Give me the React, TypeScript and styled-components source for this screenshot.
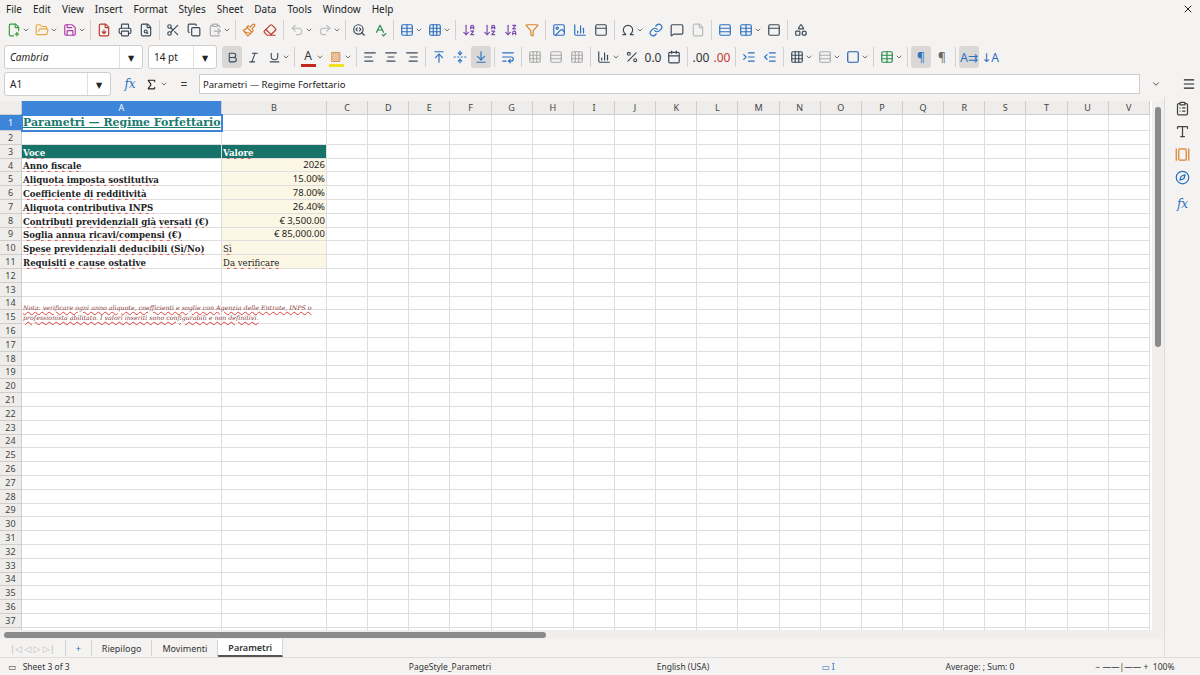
import React from "react";
import styled, { createGlobalStyle } from "styled-components";
import {
  FilePlus2, FolderOpen, Save, FileDown, Printer, FileSearch, Scissors, Copy, ClipboardPaste,
  Paintbrush, Eraser, Undo2, Redo2, SearchCode, SpellCheck, Table, Grid3x3, ArrowDownAZ,
  ArrowDownZA, Filter, Image, BarChart3, Omega, Link, MessageSquare, File, Rows3, PanelTop,
  Shapes, Bold, Italic, Underline, AlignLeft, AlignCenter, AlignRight, ArrowUpToLine,
  FoldVertical, ArrowDownToLine, WrapText, Percent, Calendar, IndentIncrease, IndentDecrease,
  Square, Menu, ClipboardList, Type, GalleryHorizontal, Compass, ChevronDown, X, Sigma,
} from "lucide-react";

const Global = createGlobalStyle`
  html, body { margin: 0; padding: 0; }
  body { width: 1200px; height: 675px; overflow: hidden; background: #f4f3f2;
    font-family: "Noto Sans", "DejaVu Sans", sans-serif; font-size: 11px; color: #222; }
`;

const Shell = styled.div`
  width: 1200px; height: 675px; display: flex; flex-direction: column;
`;
const MenuBar = styled.div`
  height: 17px; display: flex; align-items: center; padding: 0 6px; gap: 11px; font-size: 10px;
`;
const MenuFill = styled.div` flex: 1; `;
const Bar = styled.div<{ $h: number }>`
  height: ${(p) => p.$h}px; display: flex; align-items: center; padding: 0 4px; gap: 1px;
`;
const Btn = styled.div<{ $on?: boolean; $c?: string }>`
  width: 20px; height: 22px; display: flex; align-items: center; justify-content: center;
  border-radius: 3px; color: ${(p) => p.$c || "#3b4a5a"};
  background: ${(p) => (p.$on ? "#d9d8d6" : "transparent")};
`;
const Drop = styled(ChevronDown)` margin-left: -3px; margin-right: 1px; color: #333; `;
const Sep = styled.div` width: 1px; height: 20px; background: #d2d1cf; margin: 0 2px; `;
const Combo = styled.div<{ $w: number; $italic?: boolean }>`
  width: ${(p) => p.$w}px; height: 22px; background: #fff; border: 1px solid #cfcecc;
  border-radius: 3px; display: flex; align-items: center; font-size: 10px;
  font-style: ${(p) => (p.$italic ? "italic" : "normal")}; margin-right: 4px;
  span { flex: 1; padding-left: 5px; }
  b { width: 22px; border-left: 1px solid #e2e1df; height: 100%; display: flex;
    align-items: center; justify-content: center; font-size: 8px; }
`;
const Glyph = styled.div<{ $c?: string; $bar?: string; $on?: boolean }>`
  height: 22px; min-width: 18px; padding: 0 1px; display: flex; flex-direction: column;
  align-items: center; justify-content: center; font-size: 12px; color: ${(p) => p.$c || "#333"};
  border-radius: 3px; background: ${(p) => (p.$on ? "#d9d8d6" : "transparent")};
  &::after { content: ""; display: ${(p) => (p.$bar ? "block" : "none")}; width: 15px; height: 3px;
    background: ${(p) => p.$bar}; }
`;
const FormulaRow = styled.div`
  height: 26px; display: flex; align-items: center; padding: 0 4px; gap: 5px;
`;
const Input = styled.div`
  flex: 1; height: 18px; background: #fff; border: 1px solid #cfcecc; display: flex;
  align-items: center; padding-left: 3px; font-size: 9.5px;
`;
const Main = styled.div` flex: 1; display: flex; min-height: 0; `;
const SheetArea = styled.div` flex: 1; display: flex; flex-direction: column; min-width: 0; `;
const GridWrap = styled.div` flex: 1; display: flex; min-height: 0; padding-top: 4px; `;
const Grid = styled.div`
  flex: 1; display: grid; background: #fff; overflow: hidden; align-content: start;
  grid-template-columns: 22px 200px 105px repeat(20, 41.15px);
  grid-auto-rows: 13.8px; grid-template-rows: 14px 16px;
`;
const Head = styled.div<{ $sel?: boolean }>`
  background: ${(p) => (p.$sel ? "#3c85d9" : "#eeedeb")};
  color: ${(p) => (p.$sel ? "#fff" : "#444")}; font-size: 9px; display: flex;
  align-items: center; justify-content: center; border-right: 1px solid #cfcecc;
  border-bottom: 1px solid #cfcecc; box-sizing: border-box;
`;
const Cell = styled.div<{ $bg?: string; $right?: boolean; $top?: boolean }>`
  box-sizing: border-box; border-right: 1px solid #dedede; border-bottom: 1px solid #dedede;
  background: ${(p) => p.$bg || "#fff"}; display: flex; align-items: flex-end;
  justify-content: ${(p) => (p.$right ? "flex-end" : "flex-start")};
  padding: 0 1px; font-size: 9.5px; white-space: nowrap; overflow: visible; position: relative;
  z-index: ${(p) => (p.$top ? 3 : "auto")};
`;
const Label = styled.span<{ $c?: string }>`
  font-family: "DejaVu Serif", serif; font-weight: bold; font-size: 8.6px; color: ${(p) => p.$c || "#222"};
  text-decoration: underline wavy #e0403a; text-decoration-thickness: 1px;
`;
const Title = styled.span`
  font-family: "DejaVu Serif", serif; font-weight: bold; font-size: 11px; color: #1b7a6d;
  text-decoration: underline; padding-bottom: 1px;
`;
const Note = styled.span`
  position: absolute; left: 1px; top: 6px; width: 300px; white-space: normal; line-height: 10px;
  font-family: "DejaVu Serif", serif; font-style: italic; font-size: 6.3px; color: #8a3a3a;
  text-decoration: underline wavy #e0403a; z-index: 2;
`;
const VScroll = styled.div`
  width: 12px; background: #f0efee; display: flex; justify-content: center; padding-top: 4px;
  div { width: 6px; height: 240px; margin-top: 2px; background: #8a8a8a; border-radius: 3px; }
`;
const HScroll = styled.div`
  height: 9px; display: flex; align-items: center; padding-left: 4px; background: #f0efee;
  div { width: 542px; height: 6px; background: #8a8a8a; border-radius: 3px; }
`;
const Tabs = styled.div`
  height: 18px; display: flex; align-items: center; font-size: 9px; color: #333;
`;
const Tab = styled.div<{ $on?: boolean }>`
  padding: 0 10px; height: 16px; display: flex; align-items: center; border-right: 1px solid #d5d4d2;
  font-weight: ${(p) => (p.$on ? 600 : 400)}; background: ${(p) => (p.$on ? "#fff" : "transparent")};
  border-bottom: ${(p) => (p.$on ? "2px solid #555" : "none")};
`;
const Status = styled.div`
  height: 17px; display: grid; align-items: center; font-size: 8.5px; color: #333;
  grid-template-columns: 300px 300px 166px 124px 180px 130px;
  border-top: 1px solid #dedddb; span { text-align: center; }
`;
const Side = styled.div`
  width: 35px; display: flex; flex-direction: column; align-items: center; gap: 8px;
  padding-top: 4px; border-left: 1px solid #dedddb; color: #444;
`;

const cols = "ABCDEFGHIJKLMNOPQRSTUV".split("");
const data: Record<number, [React.ReactNode, React.ReactNode, boolean?]> = {
  4: ["Anno fiscale", "2026", true], 5: ["Aliquota imposta sostitutiva", "15.00%", true],
  6: ["Coefficiente di redditività", "78.00%", true], 7: ["Aliquota contributiva INPS", "26.40%", true],
  8: ["Contributi previdenziali già versati (€)", "€ 3,500.00", true],
  9: ["Soglia annua ricavi/compensi (€)", "€ 85,000.00", true],
  10: ["Spese previdenziali deducibili (Sì/No)", "Sì"], 11: ["Requisiti e cause ostative", "Da verificare"],
};

function Row({ n }: { n: number }) {
  const d = data[n];
  const cells: React.ReactNode[] = [];
  cols.forEach((c, i) => {
    let content: React.ReactNode = null;
    let bg: string | undefined;
    let right = false;
    const a1 = n === 1 && i === 0;
    if (a1) content = <Title>Parametri — Regime Forfettario</Title>;
    if (n === 3 && i < 2) { bg = "#17736a"; content = <Label $c="#fff">{i ? "Valore" : "Voce"}</Label>; }
    if (d && i === 0) content = <Label>{d[0]}</Label>;
    if (d && i === 1) { bg = "#fcf7e5"; right = !!d[2]; content = d[2] ? d[1] : <Label style={{ fontWeight: 400 }}>{d[1]}</Label>; }
    if (n === 14 && i === 0) content = <Note>Nota: verificare ogni anno aliquote, coefficienti e soglie con Agenzia delle Entrate, INPS o professionista abilitato. I valori inseriti sono configurabili e non definitivi.</Note>;
    const style = a1 ? { outline: "2px solid #3c85d9", outlineOffset: -1 } : undefined;
    cells.push(<Cell key={c} $bg={bg} $right={right} $top={a1} style={style}>{content}</Cell>);
  });
  return (<><Head $sel={n === 1}>{n}</Head>{cells}</>);
}

const I = 14;
export default function App() {
  return (
    <Shell>
      <Global />
      <MenuBar>
        {["File", "Edit", "View", "Insert", "Format", "Styles", "Sheet", "Data", "Tools", "Window", "Help"].map((m) => <span key={m}>{m}</span>)}
        <MenuFill /><X size={12} />
      </MenuBar>
      <Bar $h={26}>
        <Btn $c="#3a9a3a"><FilePlus2 size={I} /></Btn><Drop size={8} />
        <Btn $c="#e8a93a"><FolderOpen size={I} /></Btn><Drop size={8} />
        <Btn $c="#b03aa8"><Save size={I} /></Btn><Drop size={8} /><Sep />
        <Btn $c="#c0392b"><FileDown size={I} /></Btn><Btn><Printer size={I} /></Btn><Btn><FileSearch size={I} /></Btn><Sep />
        <Btn><Scissors size={I} /></Btn><Btn><Copy size={I} /></Btn><Btn $c="#aaa"><ClipboardPaste size={I} /></Btn><Drop size={8} /><Sep />
        <Btn $c="#d9822b"><Paintbrush size={I} /></Btn><Btn $c="#c0392b"><Eraser size={I} /></Btn><Sep />
        <Btn $c="#bbb"><Undo2 size={I} /></Btn><Drop size={8} /><Btn $c="#bbb"><Redo2 size={I} /></Btn><Drop size={8} /><Sep />
        <Btn><SearchCode size={I} /></Btn><Btn $c="#2a8a4a"><SpellCheck size={I} /></Btn><Sep />
        <Btn $c="#2a6fc0"><Table size={I} /></Btn><Drop size={8} /><Btn $c="#2a6fc0"><Grid3x3 size={I} /></Btn><Drop size={8} /><Sep />
        <Btn $c="#7a4ab0"><ArrowDownAZ size={I} /></Btn><Btn $c="#7a4ab0"><ArrowDownAZ size={I} /></Btn><Btn $c="#7a4ab0"><ArrowDownZA size={I} /></Btn><Btn $c="#d9822b"><Filter size={I} /></Btn><Sep />
        <Btn $c="#2a6fc0"><Image size={I} /></Btn><Btn $c="#2a6fc0"><BarChart3 size={I} /></Btn><Btn><PanelTop size={I} /></Btn><Sep />
        <Btn><Omega size={I} /></Btn><Drop size={8} /><Btn $c="#2a6fc0"><Link size={I} /></Btn><Btn><MessageSquare size={I} /></Btn><Btn $c="#bbb"><File size={I} /></Btn><Sep />
        <Btn $c="#2a6fc0"><Rows3 size={I} /></Btn><Btn $c="#2a6fc0"><Table size={I} /></Btn><Drop size={8} /><Btn><PanelTop size={I} /></Btn><Sep />
        <Btn><Shapes size={I} /></Btn>
      </Bar>
      <Bar $h={28}>
        <Combo $w={137} $italic><span>Cambria</span><b>▼</b></Combo>
        <Combo $w={67}><span>14 pt</span><b>▼</b></Combo>
        <Btn $on><Bold size={13} /></Btn><Btn><Italic size={13} /></Btn><Btn><Underline size={13} /></Btn><Drop size={8} /><Sep />
        <Glyph $bar="#c0281f">A</Glyph><Drop size={8} /><Glyph $bar="#f0e020" $c="#d9822b">▨</Glyph><Drop size={8} /><Sep />
        <Btn><AlignLeft size={I} /></Btn><Btn><AlignCenter size={I} /></Btn><Btn><AlignRight size={I} /></Btn><Sep />
        <Btn $c="#2a6fc0"><ArrowUpToLine size={I} /></Btn><Btn $c="#2a6fc0"><FoldVertical size={I} /></Btn><Btn $on $c="#2a6fc0"><ArrowDownToLine size={I} /></Btn><Sep />
        <Btn $c="#2a6fc0"><WrapText size={I} /></Btn><Sep />
        <Btn $c="#aaa"><Grid3x3 size={I} /></Btn><Btn $c="#aaa"><Rows3 size={I} /></Btn><Btn $c="#aaa"><Grid3x3 size={I} /></Btn><Sep />
        <Btn><BarChart3 size={I} /></Btn><Drop size={8} /><Btn><Percent size={I} /></Btn><Glyph>0.0</Glyph><Btn><Calendar size={I} /></Btn><Sep />
        <Glyph>.00</Glyph><Glyph $c="#c0392b">.00</Glyph><Sep />
        <Btn $c="#2a6fc0"><IndentIncrease size={I} /></Btn><Btn $c="#2a6fc0"><IndentDecrease size={I} /></Btn><Sep />
        <Btn><Grid3x3 size={I} /></Btn><Drop size={8} /><Btn $c="#aaa"><Rows3 size={I} /></Btn><Drop size={8} /><Btn $c="#1d5fa8"><Square size={I} /></Btn><Drop size={8} /><Sep />
        <Btn $c="#2a8a4a"><Table size={I} /></Btn><Drop size={8} /><Sep />
        <Glyph $on $c="#2a6fc0">¶</Glyph><Glyph $c="#666">¶</Glyph><Sep /><Glyph $on $c="#2a6fc0">A⇉</Glyph><Glyph $c="#2a6fc0">↓A</Glyph>
      </Bar>
      <FormulaRow>
        <Combo $w={105}><span>A1</span><b>▼</b></Combo>
        <Glyph $c="#2a6fc0" style={{ fontStyle: "italic", fontFamily: "DejaVu Serif" }}>fx</Glyph>
        <Sigma size={13} /><Drop size={8} /><Glyph>=</Glyph>
        <Input>Parametri — Regime Forfettario</Input>
        <Drop size={10} style={{ margin: "0 6px" }} />
        <Menu size={14} style={{ marginLeft: 10 }} />
      </FormulaRow>
      <Main>
        <SheetArea>
          <GridWrap>
            <Grid>
              <Head />
              {cols.map((c) => <Head key={c} $sel={c === "A"}>{c}</Head>)}
              {Array.from({ length: 38 }, (_, i) => <Row key={i} n={i + 1} />)}
            </Grid>
            <VScroll><div /></VScroll>
          </GridWrap>
          <HScroll><div /></HScroll>
          <Tabs>
            <Tab style={{ color: "#bbb" }}>|◁ ◁ ▷ ▷|</Tab>
            <Tab style={{ color: "#2a6fc0" }}>+</Tab>
            <Tab>Riepilogo</Tab><Tab>Movimenti</Tab><Tab $on>Parametri</Tab>
          </Tabs>
        </SheetArea>
        <Side>
          <ClipboardList size={15} /><Type size={15} /><GalleryHorizontal size={15} color="#d9822b" />
          <Compass size={15} color="#2a6fc0" /><Glyph $c="#2a6fc0" style={{ fontStyle: "italic", fontFamily: "DejaVu Serif" }}>fx</Glyph>
        </Side>
      </Main>
      <Status>
        <span style={{ textAlign: "left", paddingLeft: 8 }}>▭ &nbsp; Sheet 3 of 3</span>
        <span>PageStyle_Parametri</span>
        <span>English (USA)</span>
        <span style={{ color: "#2a6fc0" }}>▭ I</span>
        <span>Average: ; Sum: 0</span>
        <span>− ——|—— + &nbsp;100%</span>
      </Status>
    </Shell>
  );
}
